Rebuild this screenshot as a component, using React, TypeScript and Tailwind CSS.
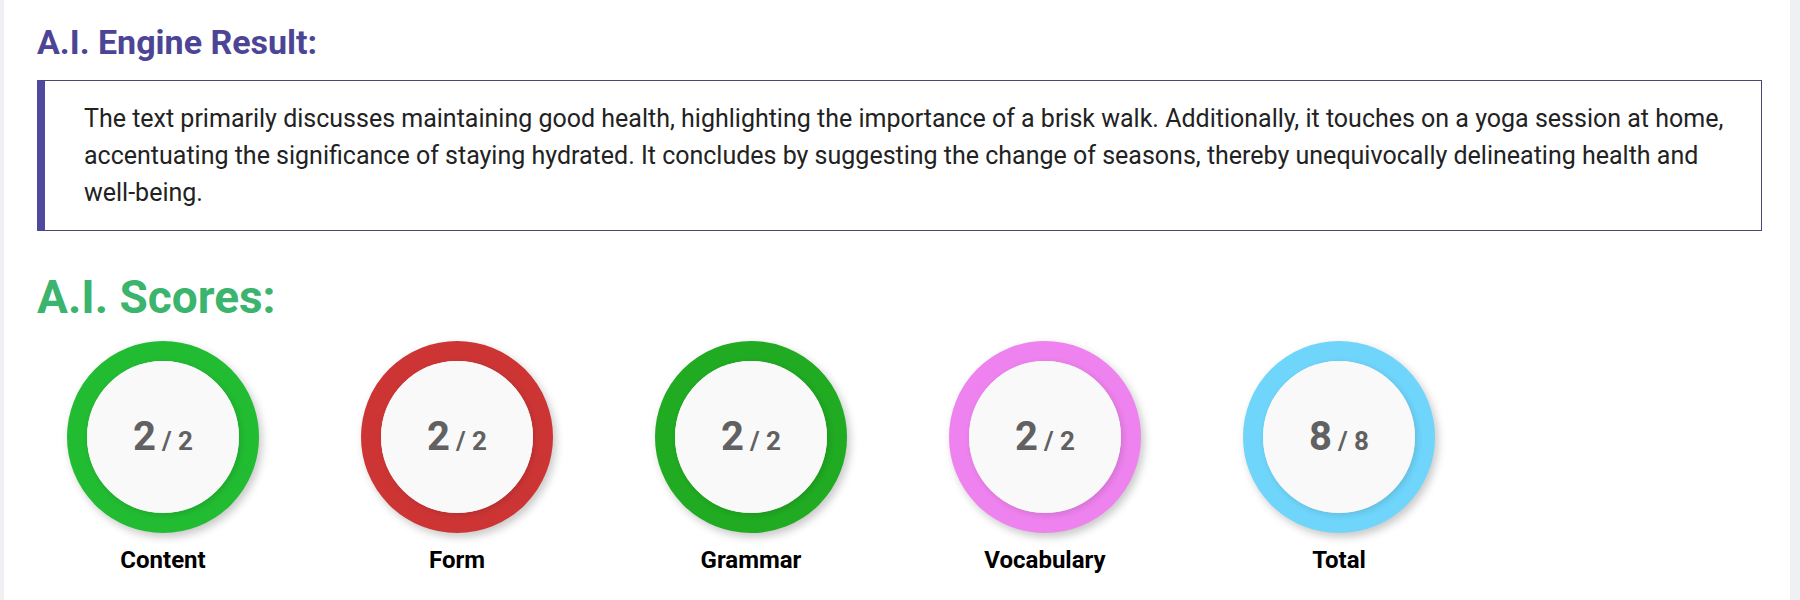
import React from "react";

/* ─── Data ──────────────────────────────────────────────────────────────── */

interface Score {
  label: string;
  value: number;
  max: number;
  ring: string;
}

const scores: Score[] = [
  { label: "Content", value: 2, max: 2, ring: "border-[#22bc32]" },
  { label: "Form", value: 2, max: 2, ring: "border-[#cd3535]" },
  { label: "Grammar", value: 2, max: 2, ring: "border-[#20ab22]" },
  { label: "Vocabulary", value: 2, max: 2, ring: "border-[#ee82ee]" },
  { label: "Total", value: 8, max: 8, ring: "border-[#6fd5fb]" },
];

const summary =
  "The text primarily discusses maintaining good health, highlighting the importance of a brisk walk. Additionally, it touches on a yoga session at home, accentuating the significance of staying hydrated. It concludes by suggesting the change of seasons, thereby unequivocally delineating health and well-being.";

/* ─── Pieces ────────────────────────────────────────────────────────────── */

function ScoreRing({ score }: { score: Score }) {
  return (
    <div className="flex w-[192px] flex-col items-center">
      <div
        className={`flex h-[192px] w-[192px] items-center justify-center rounded-full border-[20px] bg-[#f9f9f9] shadow-[3px_4px_8px_rgba(0,0,0,0.22)] ${score.ring}`}
      >
        <div className="flex h-full w-full items-center justify-center rounded-full bg-[#f9f9f9] shadow-[2px_2px_6px_rgba(0,0,0,0.12)]">
          <span className="flex items-baseline font-bold text-[#616161]">
            <span className="text-[40px] leading-none">{score.value}</span>
            <span className="ml-[6px] text-[26px] leading-none">/ {score.max}</span>
          </span>
        </div>
      </div>
      <div className="mt-[13px] whitespace-nowrap text-[24px] font-bold leading-[28px] text-black">
        {score.label}
      </div>
    </div>
  );
}

/* ─── Page ──────────────────────────────────────────────────────────────── */

export default function App() {
  return (
    <div
      className="min-h-[600px] bg-[#eef0f3]"
      style={{ fontFamily: "Roboto, 'Noto Sans', 'Liberation Sans', sans-serif" }}
    >
      <div className="ml-[4px] mr-[10px] min-h-[600px] bg-white pl-[33px] pr-[28px] pt-[22px]">
        <h2 className="text-[34px] font-bold leading-[40px] text-[#4c4595]">
          A.I. Engine Result:
        </h2>

        <div className="mt-[18px] border border-l-[8px] border-[#4a4870] border-l-[#4f4a9e] py-[19px] pl-[39px] pr-[22px]">
          <p className="text-[25px] leading-[37px] text-[#222]">{summary}</p>
        </div>

        <h2 className="mt-[40px] text-[46px] font-bold leading-[52px] text-[#3bb46e]">
          A.I. Scores:
        </h2>

        <div className="mt-[18px] flex gap-[102px] pl-[30px]">
          {scores.map((s) => (
            <ScoreRing key={s.label} score={s} />
          ))}
        </div>
      </div>
    </div>
  );
}
